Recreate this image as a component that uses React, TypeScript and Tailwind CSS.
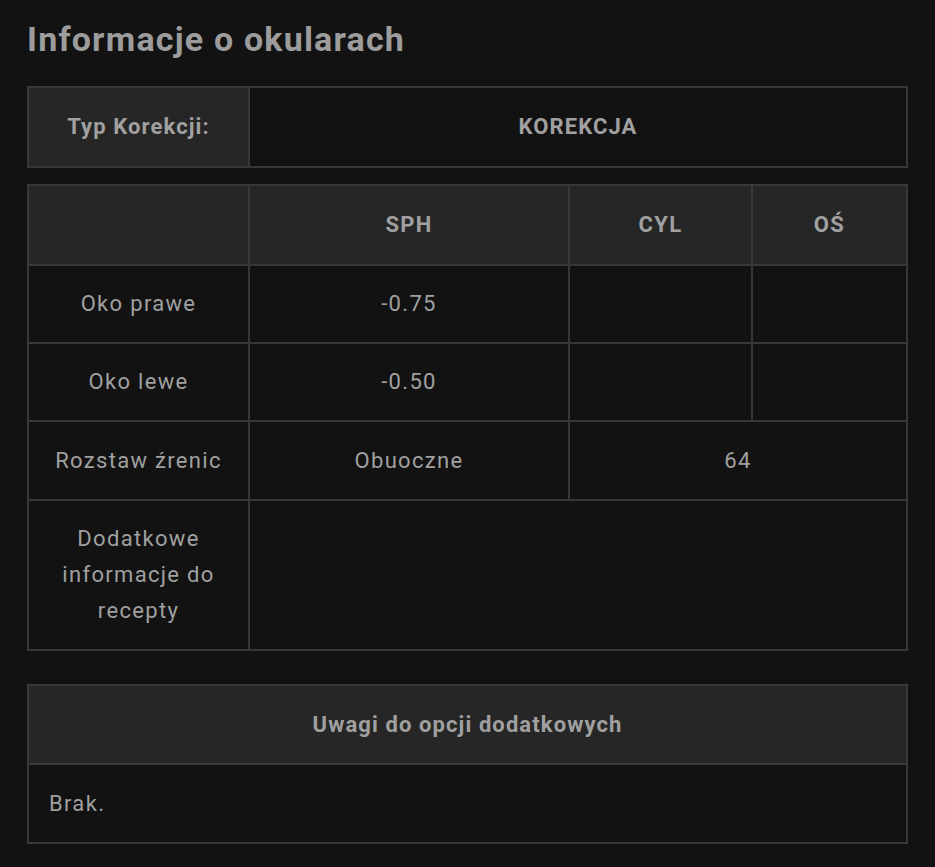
import React from 'react';

const cell = 'border-2 border-[#383838] text-center align-middle py-[19px] px-3';
const head = `${cell} bg-[#262626] font-bold`;
const body = `${cell} bg-[#121212]`;

export default function App() {
  return (
    <div className="min-h-screen bg-[#121212] px-[27px] pt-[14px] pb-6 text-[22px] leading-[36px] tracking-[0.06em] text-[#a0a0a0] font-['Roboto',sans-serif]">
      <h1 className="text-[34px] leading-[50px] font-bold tracking-[0.035em] text-[#9c9c9c] mb-[22px]">Informacje o okularach</h1>

      <table className="w-full table-fixed border-collapse">
        <colgroup>
          <col className="w-[221px]" />
          <col />
        </colgroup>
        <tbody>
          <tr>
            <td className={`${head} h-[80px] tracking-[0.05em]`}>Typ Korekcji:</td>
            <td className={`${body} font-bold tracking-[0.05em]`}>KOREKCJA</td>
          </tr>
        </tbody>
      </table>

      <table className="w-full table-fixed border-collapse mt-[16px]">
        <colgroup>
          <col className="w-[221px]" />
          <col className="w-[320px]" />
          <col className="w-[183px]" />
          <col />
        </colgroup>
        <thead>
          <tr>
            <th className={`${head} h-[80px]`}></th>
            <th className={head}>SPH</th>
            <th className={head}>CYL</th>
            <th className={head}>OŚ</th>
          </tr>
        </thead>
        <tbody>
          <tr>
            <td className={`${body} h-[78px]`}>Oko prawe</td>
            <td className={body}>-0.75</td>
            <td className={body}></td>
            <td className={body}></td>
          </tr>
          <tr>
            <td className={`${body} h-[78px]`}>Oko lewe</td>
            <td className={body}>-0.50</td>
            <td className={body}></td>
            <td className={body}></td>
          </tr>
          <tr>
            <td className={`${body} h-[79px]`}>Rozstaw źrenic</td>
            <td className={body}>Obuoczne</td>
            <td className={body} colSpan={2}>64</td>
          </tr>
          <tr>
            <td className={`${body} h-[150px]`}>Dodatkowe informacje do recepty</td>
            <td className={body} colSpan={3}></td>
          </tr>
        </tbody>
      </table>

      <table className="w-full table-fixed border-collapse mt-[33px]">
        <thead>
          <tr>
            <th className={`${head} h-[79px] tracking-[0.05em]`}>Uwagi do opcji dodatkowych</th>
          </tr>
        </thead>
        <tbody>
          <tr>
            <td className={`${body} h-[79px] !text-left !px-[20px]`}>Brak.</td>
          </tr>
        </tbody>
      </table>
    </div>
  );
}
